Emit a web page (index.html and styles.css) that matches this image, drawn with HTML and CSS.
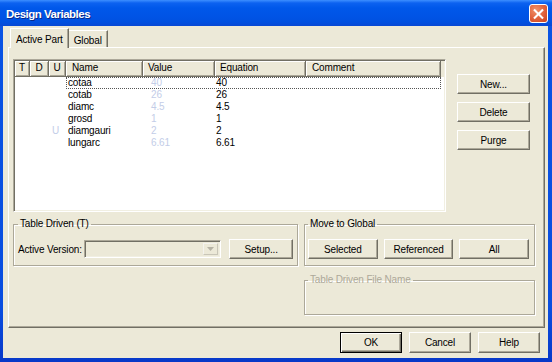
FILE: index.html
```html
<!DOCTYPE html>
<html>
<head>
<meta charset="utf-8">
<title>Design Variables</title>
<link rel="stylesheet" href="styles.css">
</head>
<body>
<div class="window">
  <div class="titlebar">
    <span class="title">Design Variables</span>
    <span class="close"><svg width="18" height="18" viewBox="0 0 18 18"><path d="M5 5 L13 13 M13 5 L5 13" stroke="#fff" stroke-width="2.2" stroke-linecap="square"/></svg></span>
  </div>
  <div class="client">
    <div class="tabs">
      <div class="tab selected">Active Part</div>
      <div class="tab">Global</div>
    </div>
    <div class="panel">
      <div class="toprow">
        <div class="list">
          <div class="hdr">
            <div class="hc c-t center">T</div>
            <div class="hc c-d center">D</div>
            <div class="hc c-u center">U</div>
            <div class="hc c-name">Name</div>
            <div class="hc c-val">Value</div>
            <div class="hc c-eq">Equation</div>
            <div class="hc c-com">Comment</div>
          </div>
          <div class="row focus">
            <div class="flags"><span></span><span></span><span></span></div>
            <div class="main"><span class="n">cotaa</span><span class="v">40</span><span class="e">40</span><span class="cm"></span></div>
          </div>
          <div class="row">
            <div class="flags"><span></span><span></span><span></span></div>
            <div class="main"><span class="n">cotab</span><span class="v">26</span><span class="e">26</span><span class="cm"></span></div>
          </div>
          <div class="row">
            <div class="flags"><span></span><span></span><span></span></div>
            <div class="main"><span class="n">diamc</span><span class="v">4.5</span><span class="e">4.5</span><span class="cm"></span></div>
          </div>
          <div class="row">
            <div class="flags"><span></span><span></span><span></span></div>
            <div class="main"><span class="n">grosd</span><span class="v">1</span><span class="e">1</span><span class="cm"></span></div>
          </div>
          <div class="row">
            <div class="flags"><span></span><span></span><span class="uflag">U</span></div>
            <div class="main"><span class="n">diamgauri</span><span class="v">2</span><span class="e">2</span><span class="cm"></span></div>
          </div>
          <div class="row">
            <div class="flags"><span></span><span></span><span></span></div>
            <div class="main"><span class="n">lungarc</span><span class="v">6.61</span><span class="e">6.61</span><span class="cm"></span></div>
          </div>
        </div>
        <div class="side">
          <button class="btn side-btn">New...</button>
          <button class="btn side-btn">Delete</button>
          <button class="btn side-btn">Purge</button>
        </div>
      </div>
      <div class="groups">
        <fieldset class="group g-table">
          <legend>Table Driven (T)</legend>
          <div class="av-row">
            <span class="lbl">Active Version:</span>
            <div class="combo"><span class="combo-arrow"><svg width="7" height="4" viewBox="0 0 7 4"><path d="M0 0 H7 L3.5 4 Z" fill="#b5b2a4"/></svg></span></div>
            <button class="btn setup">Setup...</button>
          </div>
        </fieldset>
        <fieldset class="group g-move">
          <legend>Move to Global</legend>
          <div class="move-row">
            <button class="btn move-btn">Selected</button>
            <button class="btn move-btn">Referenced</button>
            <button class="btn move-btn">All</button>
          </div>
        </fieldset>
        <fieldset class="group g-file">
          <legend>Table Driven File Name</legend>
          <div class="file-body"></div>
        </fieldset>
      </div>
    </div>
    <div class="footer">
      <button class="btn foot-btn default">OK</button>
      <button class="btn foot-btn">Cancel</button>
      <button class="btn foot-btn">Help</button>
    </div>
  </div>
</div>
</body>
</html>
```

FILE: styles.css
```css
* { box-sizing: border-box; }
html, body { margin: 0; padding: 0; }
body {
  width: 552px;
  height: 362px;
  overflow: hidden;
  font-family: "Liberation Sans", Arial, sans-serif;
  font-size: 10px;
  letter-spacing: -0.15px;
  color: #000;
}
.window {
  width: 552px;
  height: 362px;
  display: flex;
  flex-direction: column;
  background: linear-gradient(to bottom, #0a54e4 0%, #0a4ee0 85%, #0838c8 100%);
}
.titlebar {
  height: 26px;
  flex: none;
  display: flex;
  align-items: center;
  justify-content: space-between;
  padding: 0 4px 0 6px;
  background: linear-gradient(to bottom, #3d8fff 0px, #0c62f0 3px, #0058ea 8px, #0054e6 16px, #0050e0 22px, #0848d4 26px);
}
.title {
  color: #fff;
  font-weight: bold;
  font-size: 11.5px;
  letter-spacing: -0.5px;
  text-shadow: 1px 1px 0 #0a2a8a;
  margin-top: 1px;
}
.close {
  width: 19px;
  height: 19px;
  margin-top: 1px;
  border: 1px solid #fff;
  border-radius: 3px;
  background: radial-gradient(circle at 35% 30%, #f0926a 0%, #e0603a 55%, #c8431f 100%);
  display: flex;
  align-items: center;
  justify-content: center;
}
.client {
  flex: 1;
  width: 545px;
  margin: 0 4px 4px 3px;
  background: #ece9d8;
  padding: 2px 3px 0 5px;
  display: flex;
  flex-direction: column;
}
.tabs {
  height: 19px;
  display: flex;
  align-items: flex-end;
  padding-left: 2px;
}
.tab {
  background: #ece9d8;
  line-height: 12px;
  padding: 4px 5px 0 5px;
  height: 17px;
  border-top: 1px solid #fff;
  border-right: 1px solid #716f64;
  box-shadow: inset -1px 0 0 #aca899;
}
.tab.selected {
  height: 20px;
  margin-bottom: -1px;
  padding-top: 5px;
  border-left: 1px solid #fff;
  position: relative;
  z-index: 1;
}
.panel {
  width: 537px;
  height: 281px;
  border: 1px solid;
  border-color: #fff #716f64 #716f64 #fff;
  box-shadow: inset -1px -1px 0 #aca899;
  padding: 11px 4px 0 4px;
  display: flex;
  flex-direction: column;
}
.toprow {
  display: flex;
}
.list {
  width: 433px;
  height: 153px;
  background: #fff;
  border: 1px solid;
  border-color: #aca899 #fff #fff #aca899;
  box-shadow: inset 1px 1px 0 #716f64, inset -1px -1px 0 #f1efe2;
  padding: 1px;
}
.hdr {
  display: grid;
  grid-template-columns: 15px 19px 17px 77px 72px 91px 135px;
  height: 16px;
  background: #ece9d8;
}
.hc {
  line-height: 14px;
  border-right: 1px solid #716f64;
  border-bottom: 1px solid #716f64;
  box-shadow: inset 1px 1px 0 #fff, inset -1px -1px 0 #aca899;
  white-space: nowrap;
  overflow: hidden;
}
.hc.center { text-align: center; }
.c-name { padding-left: 6px; }
.c-val { padding-left: 5px; }
.c-eq { padding-left: 5px; }
.c-com { padding-left: 6px; }
.row {
  display: flex;
  height: 12px;
  line-height: 12px;
}
.flags {
  width: 51px;
  display: grid;
  grid-template-columns: 15px 19px 17px;
}
.uflag {
  color: #c3cde8;
  padding-left: 3px;
}
.main {
  width: 375px;
  display: flex;
  white-space: nowrap;
}
.row.focus .main {
  outline: 1px dotted #555;
  outline-offset: -1px;
}
.n { width: 77px; padding-left: 2px; }
.v { width: 72px; padding-left: 8px; color: #c3cde8; }
.e { width: 91px; padding-left: 1px; }
.cm { width: 135px; }
.side {
  margin-left: 11px;
  padding-top: 15px;
  display: flex;
  flex-direction: column;
  gap: 8px;
}
.btn {
  font-family: "Liberation Sans", Arial, sans-serif;
  font-size: 10px;
  letter-spacing: -0.15px;
  color: #000;
  background: #ece9d8;
  border: 1px solid;
  border-color: #fff #716f64 #716f64 #fff;
  box-shadow: inset -1px -1px 0 #aca899;
  padding: 0;
  margin: 0;
  display: flex;
  align-items: center;
  justify-content: center;
}
.side-btn { width: 73px; height: 20px; }
.groups {
  margin-top: 6px;
  width: 522px;
  display: grid;
  grid-template-columns: 285px 231px;
  column-gap: 6px;
  row-gap: 8px;
}
.group {
  margin: 0;
  min-width: 0;
  border: 1px solid #aca899;
  box-shadow: inset 1px 1px 0 #fff, 1px 1px 0 #fff;
}
.group legend {
  padding: 0 2px;
  line-height: 12px;
}
.g-table {
  width: 285px;
  grid-column: 1;
  grid-row: 1;
  padding: 9px 4px 6px 4px;
}
.g-move {
  width: 231px;
  grid-column: 2;
  grid-row: 1;
  padding: 9px 5px 5px 3px;
}
.g-file {
  width: 231px;
  grid-column: 2;
  grid-row: 2;
  padding: 0 3px 0 3px;
}
.g-file legend { color: #aca899; }
.file-body { height: 28px; }
.av-row {
  display: flex;
  align-items: center;
  height: 20px;
}
.lbl { width: 67px; white-space: nowrap; }
.combo {
  width: 138px;
  height: 18px;
  background: #ece9d8;
  border: 1px solid;
  border-color: #aca899 #fff #fff #aca899;
  box-shadow: inset 1px 1px 0 #716f64, inset -1px -1px 0 #f1efe2;
  display: flex;
  justify-content: flex-end;
  padding: 2px;
}
.combo-arrow {
  width: 15px;
  height: 12px;
  border: 1px solid;
  border-color: #f4f3ee #c9c6b8 #c9c6b8 #f4f3ee;
  display: flex;
  align-items: center;
  justify-content: center;
}
.setup { width: 64px; height: 20px; margin-left: 8px; }
.move-row {
  display: flex;
  gap: 6px;
  height: 20px;
}
.move-btn { flex: 1; height: 20px; }
.footer {
  margin-top: 4px;
  display: flex;
  justify-content: flex-end;
  gap: 7px;
  padding-right: 5px;
}
.foot-btn { width: 62px; height: 21px; }
.foot-btn.default {
  border: 1px solid #000;
  box-shadow: inset 1px 1px 0 #fff, inset -1px -1px 0 #716f64, inset -2px -2px 0 #aca899;
}
```
